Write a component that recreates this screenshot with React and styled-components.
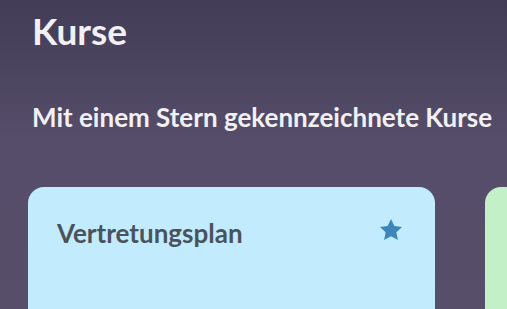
import React from 'react';
import styled, { createGlobalStyle } from 'styled-components';

const GlobalStyle = createGlobalStyle`
  html, body {
    margin: 0;
    padding: 0;
  }
  body {
    font-family: Lato, "Noto Sans", sans-serif;
    background: #4b4460;
  }
`;

const Page = styled.div`
  width: 507px;
  height: 309px;
  overflow: hidden;
  box-sizing: border-box;
  padding: 9px 0 0 28px;
  background: linear-gradient(180deg, #423c56 0%, #554d69 45%, #574f6a 100%);
`;

const Title = styled.h1`
  margin: 0 0 0 4px;
  font-size: 37px;
  font-weight: 700;
  color: #f1f0f4;
  line-height: 44px;
`;

const Subtitle = styled.h2`
  margin: 49px 0 0 4px;
  font-size: 26px;
  font-weight: 700;
  color: #f1f0f4;
  line-height: 30px;
  white-space: nowrap;
`;

const CardRow = styled.div`
  display: flex;
  gap: 50px;
  margin-top: 55px;
`;

const Card = styled.div`
  flex: 0 0 407px;
  height: 200px;
  border-radius: 16px;
  background: ${(p) => p.$bg};
  box-sizing: border-box;
  padding: 31px 30px 0 29px;
  display: flex;
  align-items: flex-start;
  justify-content: space-between;
  overflow: hidden;
`;

const CardTitle = styled.span`
  font-size: 26px;
  font-weight: 700;
  color: #4a535c;
  line-height: 30px;
`;

const Star = styled.svg`
  width: 28px;
  height: 28px;
  margin-top: -2px;
  flex: none;
  fill: #3c87b7;
`;

// second card only peeks in at the right edge, its title sits off-screen
const courses = [
  { id: 'vp', name: 'Vertretungsplan', bg: '#c2ebfd', starred: true },
  { id: 'next', name: '', bg: '#c4f0c8', starred: false },
];

export default function App() {
  return (
    <>
      <GlobalStyle />
      <Page>
        <Title>Kurse</Title>
        <Subtitle>Mit einem Stern gekennzeichnete Kurse</Subtitle>
        <CardRow>
          {courses.map((c) => (
            <Card key={c.id} $bg={c.bg}>
              {c.name && <CardTitle>{c.name}</CardTitle>}
              {c.starred && (
                <Star viewBox="0 0 24 24">
                  <path d="M12 2.5l2.9 6.1 6.6.8-4.9 4.6 1.3 6.6L12 17.3l-5.9 3.3 1.3-6.6-4.9-4.6 6.6-.8z" />
                </Star>
              )}
            </Card>
          ))}
        </CardRow>
      </Page>
    </>
  );
}
